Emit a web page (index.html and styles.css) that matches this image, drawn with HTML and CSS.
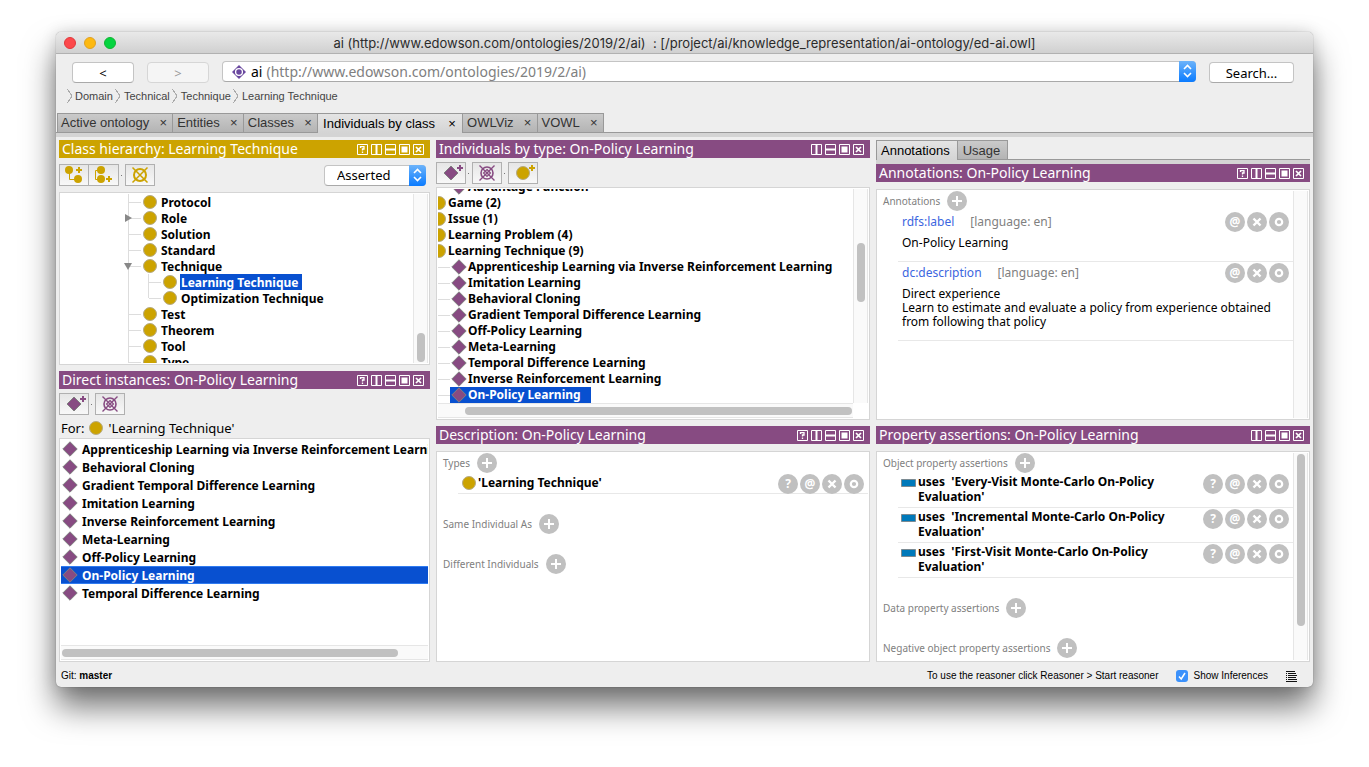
FILE: index.html
```html
<!DOCTYPE html>
<html lang="en">
<head>
<meta charset="utf-8">
<title>ai ontology</title>
<link rel="stylesheet" href="styles.css">
</head>
<body>
<svg class="defs" aria-hidden="true">
  <symbol id="w-help" viewBox="0 0 11 11"><path d="M.5.5h10v10H.5z" fill="none" stroke="#fff"/><path d="M3.500 4V2.700h3.500v2.300H5.500v1.500M5.500 7.500v1.500" fill="none" stroke="#fff" stroke-width="1.300"/></symbol>
  <symbol id="w-cols" viewBox="0 0 11 11"><path d="M.5.5h10v10H.5z" fill="none" stroke="#fff"/><path d="M4.500 1h2v9h-2z" fill="#fff"/></symbol>
  <symbol id="w-rows" viewBox="0 0 11 11"><path d="M.5.5h10v10H.5z" fill="none" stroke="#fff"/><path d="M1 4.500h9v2H1z" fill="#fff"/></symbol>
  <symbol id="w-full" viewBox="0 0 11 11"><path d="M.5.5h10v10H.5z" fill="none" stroke="#fff"/><path d="M2.500 2.500h6v6h-6z" fill="#fff"/></symbol>
  <symbol id="w-close" viewBox="0 0 11 11"><path d="M.5.5h10v10H.5z" fill="none" stroke="#fff"/><path d="M3 3l5 5M8 3L3 8" stroke="#fff" stroke-width="1.700"/></symbol>
  <symbol id="cls" viewBox="0 0 14 14"><circle cx="7" cy="7" r="6.500" fill="#cca300" stroke="#b5aa84"/></symbol>
  <symbol id="ind" viewBox="0 0 16 16"><path d="M8 .8L15.200 8 8 15.200.8 8z" fill="#874b82" stroke="#808080" stroke-linejoin="round"/></symbol>
  <symbol id="prop" viewBox="0 0 15 8"><path d="M.5.5h14v7H.5z" fill="#0079ba" stroke="#7b8a92"/></symbol>
  <symbol id="subcls" viewBox="0 0 28 20"><g fill="#cca300"><circle cx="9" cy="5" r="4"/><circle cx="18" cy="14" r="4"/><path d="M18 2h2v2h2v2h-2v2h-2V6h-2V4h2z"/></g><path d="M9.500 6v8.500H15" fill="none" stroke="#cca300"/></symbol>
  <symbol id="sibcls" viewBox="0 0 28 20"><g fill="#cca300"><circle cx="12" cy="5" r="4"/><circle cx="12" cy="14" r="4"/><path d="M19 11h2v2h2v2h-2v2h-2v-2h-2v-2h2z"/></g><path d="M9 5.500H6.500v9H9" fill="none" stroke="#cca300"/></symbol>
  <symbol id="del" viewBox="0 0 28 20"><g fill="none" stroke="currentColor"><circle cx="14" cy="10" r="6" stroke-width="2"/><path d="M6.500 2.500l15 15M21.500 2.500l-15 15" stroke-width="1.500"/></g></symbol>
  <symbol id="delind" viewBox="0 0 28 20"><g fill="none" stroke="currentColor"><path d="M14 6.500l3.500 3.500-3.500 3.500L10.500 10z" stroke-width="1.200"/><circle cx="14" cy="10" r="6" stroke-width="1.600"/><path d="M6.500 2.500l15 15M21.500 2.500l-15 15" stroke-width="1.400"/></g></symbol>
  <symbol id="addind" viewBox="0 0 28 20"><path d="M14 3l7 7-7 7-7-7z" fill="#874b82" stroke="#808080"/><path d="M22 2h2v2h2v2h-2v2h-2V6h-2V4h2z" fill="#874b82"/></symbol>
  <symbol id="addcls" viewBox="0 0 28 20"><circle cx="14" cy="10" r="6.500" fill="#cca300" stroke="#b5aa84"/><path d="M22 2h2v2h2v2h-2v2h-2V6h-2V4h2z" fill="#cca300"/></symbol>
  <symbol id="plus" viewBox="0 0 20 20"><circle cx="10" cy="10" r="10" fill="#c0c0c0"/><path d="M10 5v10M5 10h10" stroke="#fff" stroke-width="2"/></symbol>
  <symbol id="x" viewBox="0 0 20 20"><circle cx="10" cy="10" r="10" fill="#c0c0c0"/><path d="M6.500 6.500l7 7M13.500 6.500l-7 7" stroke="#fff" stroke-width="2.400"/></symbol>
  <symbol id="o" viewBox="0 0 20 20"><circle cx="10" cy="10" r="10" fill="#c0c0c0"/><circle cx="10" cy="10" r="3.200" fill="none" stroke="#fff" stroke-width="2.200"/></symbol>
  <symbol id="chev" viewBox="0 0 17 20"><path d="M5 8l3.500-3.500L12 8M5 12l3.500 3.500L12 12" fill="none" stroke="#fff" stroke-width="1.600"/></symbol>
</svg>

<div class="window">
  <header class="titlebar">
    <div class="lights"><button class="light red" aria-label="Close"></button><button class="light amber" aria-label="Minimise"></button><button class="light green" aria-label="Zoom"></button></div>
    <h1>ai (http://www.edowson.com/ontologies/2019/2/ai)&nbsp; : [/project/ai/knowledge_representation/ai-ontology/ed-ai.owl]</h1>
  </header>

  <div class="navbar">
    <button class="push nav">&lt;</button>
    <button class="push nav" disabled>&gt;</button>
    <div class="combo main">
      <svg class="onto" viewBox="0 0 14 14" aria-hidden="true"><path d="M7 0l7 7-7 7-7-7z" fill="#6a489f"/><circle cx="7" cy="7" r="3.400" fill="none" stroke="#fff" stroke-width="1.300"/></svg>
      <label for="ontology">ai</label>
      <select id="ontology"><option>(http://www.edowson.com/ontologies/2019/2/ai)</option></select>
      <span class="arrow"><svg width="17" height="20"><use href="#chev"/></svg></span>
    </div>
    <button class="push search">Search...</button>
  </div>

  <nav class="crumbs">
    <a href="#">Domain</a><a href="#">Technical</a><a href="#">Technique</a><a href="#">Learning Technique</a>
  </nav>

  <div class="tabs">
    <div class="tab"><button>Active ontology</button><button class="tx">×</button></div>
    <div class="tab"><button>Entities</button><button class="tx">×</button></div>
    <div class="tab"><button>Classes</button><button class="tx">×</button></div>
    <div class="tab on"><button>Individuals by class</button><button class="tx">×</button></div>
    <div class="tab"><button>OWLViz</button><button class="tx">×</button></div>
    <div class="tab"><button>VOWL</button><button class="tx">×</button></div>
  </div>

  <main class="work">
    <div class="col left">
      <section class="panel hier">
        <header class="head gold"><h2>Class hierarchy: Learning Technique</h2>
          <div class="ctl"><button aria-label="Help"><svg><use href="#w-help"/></svg></button><button aria-label="Split vertically"><svg><use href="#w-cols"/></svg></button><button aria-label="Split horizontally"><svg><use href="#w-rows"/></svg></button><button aria-label="Float"><svg><use href="#w-full"/></svg></button><button aria-label="Close view"><svg><use href="#w-close"/></svg></button></div></header>
        <div class="tools wide">
          <div class="pair"><button class="tool" aria-label="Add subclass"><svg><use href="#subcls"/></svg></button><button class="tool" aria-label="Add sibling class"><svg><use href="#sibcls"/></svg></button></div>
          <i class="dot"></i>
          <button class="tool goldink" aria-label="Delete class"><svg><use href="#del"/></svg></button>
          <div class="combo mode"><select aria-label="Hierarchy mode"><option>Asserted</option></select><span class="arrow"><svg width="17" height="20"><use href="#chev"/></svg></span></div>
        </div>
        <div class="box split">
          <div class="view">
            <ul class="tree classes">
              <li><div class="node"><svg class="ci"><use href="#cls"/></svg><span>Protocol</span></div></li>
              <li><div class="node"><i class="tri shut"></i><svg class="ci"><use href="#cls"/></svg><span>Role</span></div></li>
              <li><div class="node"><svg class="ci"><use href="#cls"/></svg><span>Solution</span></div></li>
              <li><div class="node"><svg class="ci"><use href="#cls"/></svg><span>Standard</span></div></li>
              <li><div class="node"><i class="tri open"></i><svg class="ci"><use href="#cls"/></svg><span>Technique</span></div>
                <ul>
                  <li><div class="node"><svg class="ci"><use href="#cls"/></svg><span class="sel">Learning Technique</span></div></li>
                  <li><div class="node"><svg class="ci"><use href="#cls"/></svg><span>Optimization Technique</span></div></li>
                </ul></li>
              <li><div class="node"><svg class="ci"><use href="#cls"/></svg><span>Test</span></div></li>
              <li><div class="node"><svg class="ci"><use href="#cls"/></svg><span>Theorem</span></div></li>
              <li><div class="node"><svg class="ci"><use href="#cls"/></svg><span>Tool</span></div></li>
              <li><div class="node"><svg class="ci"><use href="#cls"/></svg><span>Type</span></div></li>
            </ul>
          </div>
          <div class="vbar end"><i class="thumb t1"></i></div>
        </div>
      </section>

      <section class="panel inst">
        <header class="head"><h2>Direct instances: On-Policy Learning</h2>
          <div class="ctl"><button aria-label="Help"><svg><use href="#w-help"/></svg></button><button aria-label="Split vertically"><svg><use href="#w-cols"/></svg></button><button aria-label="Split horizontally"><svg><use href="#w-rows"/></svg></button><button aria-label="Float"><svg><use href="#w-full"/></svg></button><button aria-label="Close view"><svg><use href="#w-close"/></svg></button></div></header>
        <div class="tools">
          <button class="tool" aria-label="Add individual"><svg><use href="#addind"/></svg></button><i class="dot"></i>
          <button class="tool" aria-label="Delete individual"><svg><use href="#delind"/></svg></button>
        </div>
        <p class="for">For: <svg class="ci"><use href="#cls"/></svg> 'Learning Technique'</p>
        <div class="box stack">
          <ul class="list view">
            <li><svg class="di"><use href="#ind"/></svg>Apprenticeship Learning via Inverse Reinforcement Learning</li>
            <li><svg class="di"><use href="#ind"/></svg>Behavioral Cloning</li>
            <li><svg class="di"><use href="#ind"/></svg>Gradient Temporal Difference Learning</li>
            <li><svg class="di"><use href="#ind"/></svg>Imitation Learning</li>
            <li><svg class="di"><use href="#ind"/></svg>Inverse Reinforcement Learning</li>
            <li><svg class="di"><use href="#ind"/></svg>Meta-Learning</li>
            <li><svg class="di"><use href="#ind"/></svg>Off-Policy Learning</li>
            <li class="on"><svg class="di"><use href="#ind"/></svg>On-Policy Learning</li>
            <li><svg class="di"><use href="#ind"/></svg>Temporal Difference Learning</li>
          </ul>
          <div class="hbar"><i class="thumb h1"></i></div>
        </div>
      </section>
    </div>

    <div class="col">
      <section class="panel upper">
        <header class="head"><h2>Individuals by type: On-Policy Learning</h2>
          <div class="ctl"><button aria-label="Split vertically"><svg><use href="#w-cols"/></svg></button><button aria-label="Split horizontally"><svg><use href="#w-rows"/></svg></button><button aria-label="Float"><svg><use href="#w-full"/></svg></button><button aria-label="Close view"><svg><use href="#w-close"/></svg></button></div></header>
        <div class="tools">
          <button class="tool" aria-label="Add individual"><svg><use href="#addind"/></svg></button><i class="dot"></i>
          <button class="tool" aria-label="Delete individual"><svg><use href="#delind"/></svg></button><i class="dot"></i>
          <button class="tool" aria-label="Add class"><svg><use href="#addcls"/></svg></button>
        </div>
        <div class="box stack">
          <div class="split grow">
            <div class="view">
              <ul class="tree types">
                <li class="leaf"><svg class="di"><use href="#ind"/></svg><span>Advantage Function</span></li>
                <li><svg class="ci"><use href="#cls"/></svg><span>Game (2)</span></li>
                <li><svg class="ci"><use href="#cls"/></svg><span>Issue (1)</span></li>
                <li><svg class="ci"><use href="#cls"/></svg><span>Learning Problem (4)</span></li>
                <li><svg class="ci"><use href="#cls"/></svg><span>Learning Technique (9)</span></li>
                <li class="leaf"><svg class="di"><use href="#ind"/></svg><span>Apprenticeship Learning via Inverse Reinforcement Learning</span></li>
                <li class="leaf"><svg class="di"><use href="#ind"/></svg><span>Imitation Learning</span></li>
                <li class="leaf"><svg class="di"><use href="#ind"/></svg><span>Behavioral Cloning</span></li>
                <li class="leaf"><svg class="di"><use href="#ind"/></svg><span>Gradient Temporal Difference Learning</span></li>
                <li class="leaf"><svg class="di"><use href="#ind"/></svg><span>Off-Policy Learning</span></li>
                <li class="leaf"><svg class="di"><use href="#ind"/></svg><span>Meta-Learning</span></li>
                <li class="leaf"><svg class="di"><use href="#ind"/></svg><span>Temporal Difference Learning</span></li>
                <li class="leaf"><svg class="di"><use href="#ind"/></svg><span>Inverse Reinforcement Learning</span></li>
                <li class="leaf"><div class="pick"><svg class="di"><use href="#ind"/></svg><span>On-Policy Learning</span></div></li>
              </ul>
            </div>
            <div class="vbar"><i class="thumb t2"></i></div>
          </div>
          <div class="hbar short"><i class="thumb h2"></i></div>
        </div>
      </section>

      <section class="panel lower">
        <header class="head"><h2>Description: On-Policy Learning</h2>
          <div class="ctl"><button aria-label="Help"><svg><use href="#w-help"/></svg></button><button aria-label="Split vertically"><svg><use href="#w-cols"/></svg></button><button aria-label="Split horizontally"><svg><use href="#w-rows"/></svg></button><button aria-label="Float"><svg><use href="#w-full"/></svg></button><button aria-label="Close view"><svg><use href="#w-close"/></svg></button></div></header>
        <div class="box gap">
          <div class="view frames">
            <h3>Types <button class="rb" aria-label="Add type"><svg><use href="#plus"/></svg></button></h3>
            <div class="row"><svg class="ci"><use href="#cls"/></svg><b>'Learning Technique'</b>
              <div class="acts"><button class="rb txt">?</button><button class="rb txt">@</button><button class="rb" aria-label="Remove"><svg><use href="#x"/></svg></button><button class="rb" aria-label="Edit"><svg><use href="#o"/></svg></button></div></div>
            <h3 class="next">Same Individual As <button class="rb" aria-label="Add same individual"><svg><use href="#plus"/></svg></button></h3>
            <h3 class="next">Different Individuals <button class="rb" aria-label="Add different individual"><svg><use href="#plus"/></svg></button></h3>
          </div>
        </div>
      </section>
    </div>

    <div class="col">
      <section class="panel upper">
        <div class="subtabs"><button class="on">Annotations</button><button>Usage</button></div>
        <header class="head"><h2>Annotations: On-Policy Learning</h2>
          <div class="ctl"><button aria-label="Help"><svg><use href="#w-help"/></svg></button><button aria-label="Split vertically"><svg><use href="#w-cols"/></svg></button><button aria-label="Split horizontally"><svg><use href="#w-rows"/></svg></button><button aria-label="Float"><svg><use href="#w-full"/></svg></button><button aria-label="Close view"><svg><use href="#w-close"/></svg></button></div></header>
        <div class="box gap split">
          <div class="view frames">
            <h3>Annotations <button class="rb" aria-label="Add annotation"><svg><use href="#plus"/></svg></button></h3>
            <article class="ann">
              <div class="meta"><a href="#">rdfs:label</a><span>[language: en]</span><div class="acts"><button class="rb txt">@</button><button class="rb" aria-label="Remove"><svg><use href="#x"/></svg></button><button class="rb" aria-label="Edit"><svg><use href="#o"/></svg></button></div></div>
              <p>On-Policy Learning</p>
            </article>
            <article class="ann">
              <div class="meta"><a href="#">dc:description</a><span>[language: en]</span><div class="acts"><button class="rb txt">@</button><button class="rb" aria-label="Remove"><svg><use href="#x"/></svg></button><button class="rb" aria-label="Edit"><svg><use href="#o"/></svg></button></div></div>
              <p>Direct experience<br>Learn to estimate and evaluate a policy from experience obtained from following that policy</p>
            </article>
          </div>
          <div class="vbar"></div>
        </div>
      </section>

      <section class="panel lower">
        <header class="head"><h2>Property assertions: On-Policy Learning</h2>
          <div class="ctl"><button aria-label="Split vertically"><svg><use href="#w-cols"/></svg></button><button aria-label="Split horizontally"><svg><use href="#w-rows"/></svg></button><button aria-label="Float"><svg><use href="#w-full"/></svg></button><button aria-label="Close view"><svg><use href="#w-close"/></svg></button></div></header>
        <div class="box gap split">
          <div class="view frames">
            <h3>Object property assertions <button class="rb" aria-label="Add object property assertion"><svg><use href="#plus"/></svg></button></h3>
            <div class="row prop"><svg class="pi"><use href="#prop"/></svg><b>uses&nbsp; 'Every-Visit Monte-Carlo On-Policy Evaluation'</b>
              <div class="acts"><button class="rb txt">?</button><button class="rb txt">@</button><button class="rb" aria-label="Remove"><svg><use href="#x"/></svg></button><button class="rb" aria-label="Edit"><svg><use href="#o"/></svg></button></div></div>
            <div class="row prop"><svg class="pi"><use href="#prop"/></svg><b>uses&nbsp; 'Incremental Monte-Carlo On-Policy Evaluation'</b>
              <div class="acts"><button class="rb txt">?</button><button class="rb txt">@</button><button class="rb" aria-label="Remove"><svg><use href="#x"/></svg></button><button class="rb" aria-label="Edit"><svg><use href="#o"/></svg></button></div></div>
            <div class="row prop"><svg class="pi"><use href="#prop"/></svg><b>uses&nbsp; 'First-Visit Monte-Carlo On-Policy Evaluation'</b>
              <div class="acts"><button class="rb txt">?</button><button class="rb txt">@</button><button class="rb" aria-label="Remove"><svg><use href="#x"/></svg></button><button class="rb" aria-label="Edit"><svg><use href="#o"/></svg></button></div></div>
            <h3 class="next">Data property assertions <button class="rb" aria-label="Add data property assertion"><svg><use href="#plus"/></svg></button></h3>
            <h3 class="next">Negative object property assertions <button class="rb" aria-label="Add negative object property assertion"><svg><use href="#plus"/></svg></button></h3>
          </div>
          <div class="vbar"><i class="thumb t3"></i></div>
        </div>
      </section>
    </div>
  </main>

  <footer class="status">
    <span>Git: <b>master</b></span>
    <span class="hint">To use the reasoner click Reasoner &gt; Start reasoner</span>
    <label><input type="checkbox" checked><svg class="tick" viewBox="0 0 12 12" aria-hidden="true"><path d="M3 6.500l2.200 2.500L9 3" fill="none" stroke="#fff" stroke-width="1.500"/></svg>Show Inferences</label>
    <button class="log" aria-label="Show log"><svg width="11" height="11" viewBox="0 0 11 11"><path d="M0 .5h9M2 2.500h8M2 4.500h9M2 6.500h8M2 8.500h9M0 10.500h11M0 2.500h1M0 4.500h1M0 6.500h1M0 8.500h1" stroke="#111"/></svg></button>
  </footer>
</div>
</body>
</html>
```

FILE: styles.css
```css
* { box-sizing: border-box; }
body {
  margin: 0;
  min-height: 100vh;
  padding: 32px 56px 80px 56px;
  display: flex;
  background: #fff;
  color: #000;
  font: 12px/16px "Noto Sans", "Open Sans", sans-serif;
}
h1, h2, h3, p, ul { margin: 0; padding: 0; list-style: none; }
h1, h2, h3 { font-weight: 400; }
button, select { font: inherit; color: inherit; margin: 0; padding: 0; border: 0; background: none; }
a { color: inherit; text-decoration: none; }
svg { display: block; flex: none; }
.defs { position: absolute; width: 0; height: 0; }

.window {
  flex: 1;
  min-width: 0;
  display: flex;
  flex-direction: column;
  background: #eee;
  border-radius: 5px;
  overflow: hidden;
  box-shadow: 0 0 1px rgba(0,0,0,.5), 0 0 16px rgba(0,0,0,.14), 0 20px 32px rgba(0,0,0,.55);
}

/* title bar */
.titlebar {
  position: relative;
  height: 22px;
  display: flex;
  justify-content: center;
  align-items: center;
  background: linear-gradient(#e9e9e9, #d0d0d0);
  border-bottom: 1px solid #b1b1b1;
}
.titlebar h1 { font: 13px/20px Inter, Roboto, sans-serif; color: #2b2b2b; }
.lights { position: absolute; left: 8px; display: flex; gap: 8px; }
.light { width: 12px; height: 12px; border-radius: 50%; border: 1px solid; }
.red { background: #fc484b; border-color: #e0383b; }
.amber { background: #fdb911; border-color: #dfa023; }
.green { background: #05d440; border-color: #12b432; }

/* navigation */
.navbar { display: flex; align-items: center; gap: 13px; padding: 7px 19px 0 16px; height: 30px; }
.push {
  height: 21px;
  background: #fff;
  border: 1px solid #c4c4c4;
  border-bottom-color: #a9a9a9;
  border-radius: 4px;
  font-size: 13px;
  line-height: 18px;
}
.push:disabled { background: #f5f5f5; border-color: #d6d6d6; color: #999; }
.nav { width: 62px; }
.search { width: 85px; }
.combo {
  position: relative;
  flex: 1;
  height: 21px;
  display: flex;
  align-items: center;
  background: #fff;
  border: 1px solid #c4c4c4;
  border-bottom-color: #a9a9a9;
  border-radius: 4px;
  font-size: 13px;
  padding-left: 9px;
}
.combo.main { font-size: 14px; line-height: 18px; margin-bottom: 2px; }
.combo select { appearance: none; flex: 1; min-width: 0; outline: 0; }
.combo label { margin: 0 4px 0 5px; }
#ontology { color: #808080; }
.onto { width: 14px; height: 14px; }
.arrow {
  position: absolute;
  right: -1px;
  top: -1px;
  width: 17px;
  height: 21px;
  border-radius: 0 4px 4px 0;
  background: linear-gradient(#6cb3fa, #0a7bff);
  pointer-events: none;
}

.crumbs { display: flex; align-items: flex-start; height: 29px; padding: 5px 0 0 10px; font: 11px/14px "Liberation Sans", Arial, sans-serif; color: #444; }
.crumbs a { display: flex; align-items: center; margin-right: 2px; }
.crumbs a::before {
  content: "";
  width: 6px;
  height: 14px;
  margin-right: 3px;
  background: linear-gradient(to top right, transparent 45%, #aaa 46%, #aaa 58%, transparent 60%) top / 5px 7px no-repeat, linear-gradient(to bottom right, transparent 45%, #aaa 46%, #aaa 58%, transparent 60%) bottom / 5px 7px no-repeat;
}

/* main tabs */
.tabs {
  display: flex;
  height: 24px;
  padding-left: 1px;
  font: 13px/16px "Liberation Sans", Arial, sans-serif;
  background: linear-gradient(#999, #999) 0 19px / 100% 1px no-repeat, linear-gradient(#d4d4d4, #d4d4d4) 0 20px / 100% 4px no-repeat;
}
.tab {
  height: 20px;
  display: flex;
  align-items: center;
  gap: 9px;
  padding: 0 4px;
  border: 1px solid #999;
  border-left-width: 0;
  background: linear-gradient(#cacaca, #b4b4b4);
  color: #333;
}
.tab:first-child { border-left-width: 1px; padding-left: 3px; }
.tab.on { gap: 12px; height: 20px; padding: 0 5px; border-bottom: 0; background: linear-gradient(#e4e4e4, #d4d4d4); color: #000; }
.tx { width: 10px; font-size: 13px; }

/* workspace */
.work { flex: 1; display: grid; grid-template-columns: 371fr 434fr 434fr; gap: 6px; padding: 3px 3px 0; }
.col { display: flex; flex-direction: column; gap: 6px; min-width: 0; }
.panel { display: flex; flex-direction: column; min-height: 0; min-width: 0; }
.hier { flex: 225 1 0; }
.inst { flex: 291 1 0; }
.upper { flex: 280 1 0; }
.lower { flex: 236 1 0; }
.head { display: flex; align-items: center; justify-content: space-between; height: 18px; flex: none; padding: 0 6px 0 3px; background: #874b82; color: #fff; }
.head.gold { background: #cca300; }
.head h2 { font-size: 14px; line-height: 18px; white-space: nowrap; }
.ctl { display: flex; gap: 3px; }
.ctl button, .ctl svg { width: 11px; height: 11px; }

.tools { display: flex; align-items: center; flex: none; padding: 4px 0 3px; }
.tools.wide { padding: 6px 4px 6px 0; }
.pair { display: flex; }
.pair .tool + .tool { border-left: 0; }
.tool { width: 30px; height: 22px; border: 1px solid #b0b0b0; background: linear-gradient(#e6e6e6, #f8f8f8); color: #874b82; }
.tool svg { width: 28px; height: 20px; }
.goldink { color: #cca300; }
.dot { width: 1px; height: 1px; margin: 0 3px 0 2px; background: #777; }
.combo.mode { flex: 0 0 102px; margin-left: auto; padding-left: 12px; }

.box { flex: 1; min-height: 0; padding: 1px; background: #fff; border: 1px solid #d5d5d5; }
.gap { margin-top: 7px; }
.split { display: flex; min-height: 0; }
.stack { display: flex; flex-direction: column; }
.grow { flex: 1; }
.view { flex: 1; min-width: 0; min-height: 0; overflow: hidden; }
.vbar { flex: none; width: 15px; background: #fafafa; border: solid #e6e6e6; border-width: 0 1px; padding: 1px 2px 1px 3px; }
.hbar { flex: none; height: 15px; background: #fafafa; border: solid #e6e6e6; border-width: 1px 0; padding: 3px 1px 2px; }
.hbar.short { margin-right: 15px; }
.end { display: flex; flex-direction: column; justify-content: flex-end; }
.thumb { display: block; width: 8px; height: 8px; border-radius: 4px; background: #c1c1c1; }
.t1 { height: 29px; }
.t2 { height: 59px; margin-top: 53px; }
.t3 { height: 84%; }
.h1 { width: 92%; }
.h2 { width: auto; margin-left: 26px; }

.ci { width: 14px; height: 14px; }
.di { width: 16px; height: 16px; }
.pi { width: 15px; height: 8px; }

/* trees and lists */
.tree { font-weight: 700; white-space: nowrap; }
.classes { margin-left: 67px; border-left: 1px solid #ddd; }
.node { position: relative; display: flex; align-items: center; height: 16px; }
.node::before { content: ""; width: 12px; height: 1px; background: #ddd; margin-right: 2px; }
.node span { padding: 2px 3px 0 1px; margin-left: 3px; line-height: 14px; }
.node .sel { background: #0850d0; color: #fff; }
.classes ul { position: relative; margin-left: 20px; }
.classes ul::before { content: ""; position: absolute; left: -1px; top: 0; bottom: 8px; width: 1px; background: #ddd; }
.tri { position: absolute; border: 4px solid transparent; }
.shut { left: -4px; border-left: 7px solid #888; border-right: 0; }
.open { left: -5px; border-top: 7px solid #888; border-bottom: 0; }
.types { margin: -10px 0 0 -6px; }
.types li { display: flex; align-items: center; height: 16px; }
.types span { margin-left: 2px; }
.types .di { margin-left: 1px; }
.types .leaf .di + span { margin-left: 1px; }
.types .leaf::before { content: ""; width: 18px; height: 1px; background: #ddd; }
.pick { display: flex; background: #0850d0; color: #fff; padding-right: 10px; }
.for { display: flex; align-items: center; gap: 5px; height: 20px; padding-left: 2px; font-size: 13px; }
.list { font-weight: 700; white-space: nowrap; }
.list li { display: flex; align-items: flex-end; gap: 4px; height: 18px; padding-left: 1px; }
.list .di { margin-bottom: 1px; }
.list .on { background: #0850d0; color: #fff; box-shadow: inset 0 1px #2f7bf0, inset 0 -1px #2f7bf0; }

/* frame sections */
.frames h3 { display: flex; align-items: center; gap: 7px; height: 20px; padding-left: 5px; font-size: 10px; color: #808080; }
.frames .next { margin-top: 20px; }
.rb { display: block; width: 20px; height: 20px; border-radius: 50%; }
.rb svg { width: 20px; height: 20px; }
.rb.txt { background: #c0c0c0; color: #fff; font: 700 12px/20px "Noto Sans", sans-serif; }
.row { display: flex; align-items: flex-start; margin-left: 20px; padding: 1px 4px 0; border-bottom: 1px solid #e8e8e8; }
.row .ci { margin-top: 2px; }
.row .pi { margin-top: 5px; }
.row b { flex: 1; margin-left: 2px; line-height: 18px; }
.row .acts { height: 19px; }
.prop { padding-left: 3px; }
.prop b { line-height: 15px; padding-bottom: 3px; }
.prop .acts { margin-left: 16px; }
.acts { display: flex; gap: 2px; margin-left: auto; }
.ann { margin-left: 20px; padding: 1px 4px 11px; border-bottom: 1px solid #e8e8e8; }
.meta { display: flex; align-items: center; height: 20px; color: #808080; }
.meta a { color: #3c66e0; margin-right: 16px; }
.ann p { margin-top: 4px; line-height: 14px; }

/* annotation / usage tabs */
.subtabs {
  display: flex;
  flex: none;
  height: 24px;
  font: 13px/17px "Liberation Sans", Arial, sans-serif;
  background: linear-gradient(#999, #999) 0 19px / 100% 1px no-repeat, linear-gradient(#d4d4d4, #d4d4d4) 0 20px / 100% 4px no-repeat;
}
.subtabs button { height: 20px; padding: 0 7px 0 5px; border: 1px solid #999; border-left: 0; background: linear-gradient(#cacaca, #b4b4b4); color: #333; }
.subtabs .on { padding-left: 4px; border-left: 1px solid #999; border-bottom: 0; background: linear-gradient(#e4e4e4, #d4d4d4); color: #000; }

/* status bar */
.status { display: flex; align-items: center; height: 25px; flex: none; padding: 3px 16px 0 5px; font: 10px/14px "Liberation Sans", Arial, sans-serif; }
.hint { margin-left: auto; }
.status label { position: relative; display: flex; align-items: center; gap: 6px; margin-left: 17px; }
.status input { appearance: none; width: 12px; height: 12px; margin: 0; border-radius: 3px; background: #3b91fb; }
.tick { position: absolute; left: 0; width: 12px; height: 12px; }
.log { margin-left: 18px; }
```
